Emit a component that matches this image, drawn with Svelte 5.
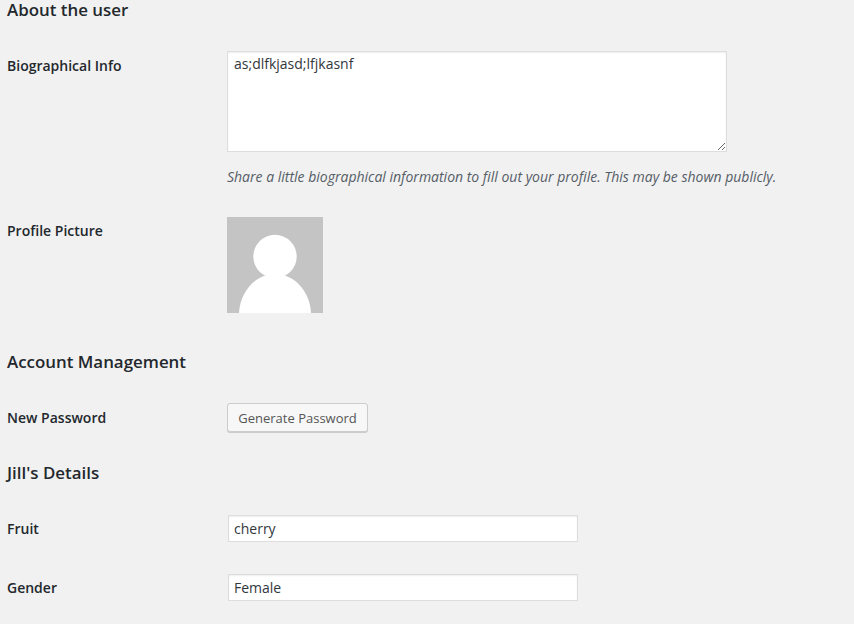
<script>
  const bio = 'as;dlfkjasd;lfjkasnf';
</script>

<main class="page">
  <h2 class="first">About the user</h2>

  <div class="row bio-row">
    <label for="bio">Biographical Info</label>
    <div class="field">
      <textarea id="bio" value={bio}></textarea>
      <p class="desc">Share a little biographical information to fill out your profile. This may be shown publicly.</p>
    </div>
  </div>

  <div class="row pic-row">
    <span class="label">Profile Picture</span>
    <div class="field">
      <svg class="avatar" width="96" height="96" viewBox="0 0 96 96" aria-hidden="true">
        <rect width="96" height="96" fill="#c4c4c4" />
        <circle cx="48" cy="39.5" r="21.7" fill="#fff" />
        <path d="M12 96C13 75 28 57 48 57S83 75 84 96Z" fill="#fff" />
      </svg>
    </div>
  </div>

  <h2 class="account">Account Management</h2>

  <div class="row pass-row">
    <span class="label">New Password</span>
    <div class="field">
      <button type="button">Generate Password</button>
    </div>
  </div>

  <h2 class="details">Jill's Details</h2>

  <div class="row input-row fruit">
    <label for="fruit">Fruit</label>
    <input id="fruit" type="text" value="cherry" />
  </div>

  <div class="row input-row gender">
    <label for="gender">Gender</label>
    <input id="gender" type="text" value="Female" />
  </div>
</main>

<style>
  :global(body) {
    margin: 0;
    background: #f1f1f1;
    font-family: "Open Sans", sans-serif;
    color: #23282d;
  }

  .page {
    width: 854px;
    height: 624px;
    box-sizing: border-box;
    padding-left: 7px;
    overflow: hidden;
  }

  h2 {
    margin: 0;
    font-size: 16.9px;
    font-weight: 600;
    line-height: 20px;
    color: #23282d;
  }

  h2.account { margin-top: 39px; }
  h2.details { margin-top: 31px; }

  .row {
    display: grid;
    grid-template-columns: 220px 1fr;
    align-items: start;
  }

  label, .label {
    font-size: 14px;
    font-weight: 600;
    line-height: 20px;
    color: #23282d;
  }

  .bio-row { margin-top: 31px; }
  .bio-row label { padding-top: 5px; }

  .field { min-width: 0; }

  textarea {
    display: block;
    width: 500px;
    height: 101px;
    box-sizing: border-box;
    margin: 0;
    padding: 2px 6px;
    border: 1px solid #ddd;
    background: #fff;
    color: #32373c;
    font: 14px/20px "Open Sans", sans-serif;
    outline: none;
    box-shadow: inset 0 1px 2px rgba(0, 0, 0, 0.07);
  }

  .desc {
    margin: 15px 0 0;
    font-size: 14px;
    font-style: italic;
    line-height: 20px;
    color: #555d66;
    white-space: nowrap;
  }

  .pic-row { margin-top: 30px; }
  .pic-row .label { padding-top: 4px; }
  .avatar { display: block; }

  .pass-row { margin-top: 31px; }
  .pass-row .label { padding-top: 5px; }

  button {
    display: block;
    width: 141px;
    height: 29px;
    box-sizing: border-box;
    margin: 0;
    padding: 0;
    border: 1px solid #ccc;
    border-radius: 3px;
    background: #f7f7f7;
    box-shadow: 0 1px 0 #ccc;
    color: #555;
    font: 13px/26px "Open Sans", sans-serif;
  }

  .input-row { align-items: center; }
  .fruit { margin-top: 32px; }
  .gender { margin-top: 32px; }

  input {
    display: block;
    width: 350px;
    height: 27px;
    box-sizing: border-box;
    margin: 0 0 0 1px;
    padding: 0 5px;
    border: 1px solid #ddd;
    background: #fff;
    color: #32373c;
    font: 14px "Open Sans", sans-serif;
    outline: none;
    box-shadow: inset 0 1px 2px rgba(0, 0, 0, 0.07);
  }
</style>
